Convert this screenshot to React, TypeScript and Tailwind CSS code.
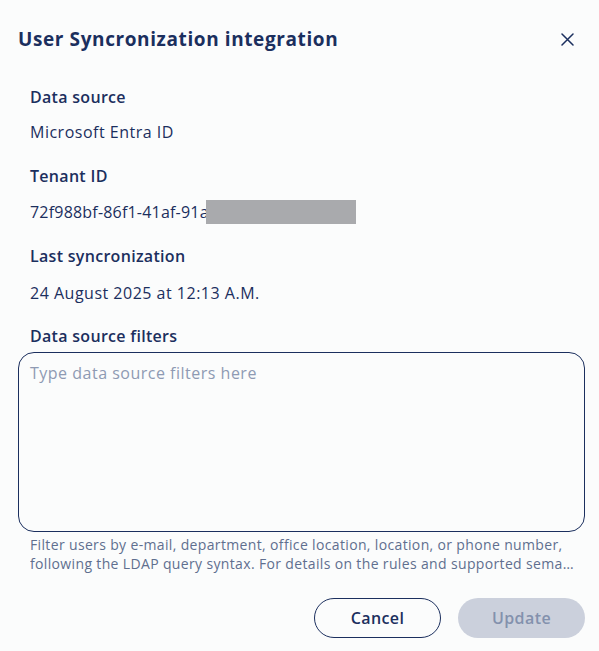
import React from "react";

const F = "'Open Sans', sans-serif";

export default function App() {
  return (
    <div className="w-[599px] h-[651px] bg-[#fbfcfc] text-[#1b2f5e] overflow-hidden" style={{ fontFamily: F }}>
      <div className="flex items-center justify-between pl-[18px] pr-[22px] pt-[28px] h-[52px]">
        <h1 className="text-[19px] font-bold leading-[24px] tracking-[0.6px] -mt-[2px]">User Syncronization integration</h1>
        <button className="w-[20px] h-[20px] flex items-center justify-center -mt-[1px]">
          <svg width="13" height="13" viewBox="0 0 13 13" fill="none" stroke="#1b2f5e" strokeWidth="1.5" strokeLinecap="round">
            <path d="M1 1L12 12M12 1L1 12" />
          </svg>
        </button>
      </div>
      <div className="px-[18px] pt-[35px]">
        <div className="pl-[12px] flex flex-col">
          <div className="text-[16px] font-semibold leading-[20px] tracking-[0.3px]">Data source</div>
          <div className="text-[16px] leading-[20px] tracking-[0.5px] mt-[15px]">Microsoft Entra ID</div>
          <div className="text-[16px] font-semibold leading-[20px] tracking-[0.3px] mt-[24px]">Tenant ID</div>
          <div className="text-[16px] leading-[20px] tracking-[0.2px] mt-[14px] flex items-center">
            <span>72f988bf-86f1-41af-91a</span>
            <span className="inline-block w-[150px] h-[24px] bg-[#a9aaad] -ml-[3px]" />
          </div>
          <div className="text-[16px] font-semibold leading-[20px] tracking-[0.3px] mt-[22px]">Last syncronization</div>
          <div className="text-[16px] leading-[20px] tracking-[0.5px] mt-[17px]">24 August 2025 at 12:13 A.M.</div>
          <div className="text-[16px] font-semibold leading-[20px] tracking-[0.3px] mt-[23px]">Data source filters</div>
        </div>
        <textarea
          className="block mt-[6px] w-[567px] h-[180px] rounded-[16px] border border-[#1b2f5e] bg-transparent px-[11px] py-[8px] text-[16px] tracking-[0.5px] resize-none outline-none placeholder:text-[#8e9ab3]"
          placeholder="Type data source filters here"
          style={{ fontFamily: F }}
        />
        <div className="pl-[12px] mt-[3px] text-[14px] leading-[19px] tracking-[0.35px] text-[#5f6f8f] w-[567px] pr-[10px]">
          <p className="whitespace-nowrap">Filter users by e-mail, department, office location, location, or phone number,</p>
          <p className="whitespace-nowrap overflow-hidden text-ellipsis">following the LDAP query syntax. For details on the rules and supported semantics, see the documentation.</p>
        </div>
        <div className="flex justify-end gap-[17px] mt-[25px] w-[567px]">
          <button className="w-[127px] h-[40px] rounded-full border border-[#1b2f5e] text-[16px] font-semibold tracking-[0.4px] text-[#1b2f5e]">Cancel</button>
          <button className="w-[127px] h-[40px] rounded-full bg-[#cbd0dc] text-[16px] font-semibold tracking-[0.4px] text-[#8391ad]">Update</button>
        </div>
      </div>
    </div>
  );
}
